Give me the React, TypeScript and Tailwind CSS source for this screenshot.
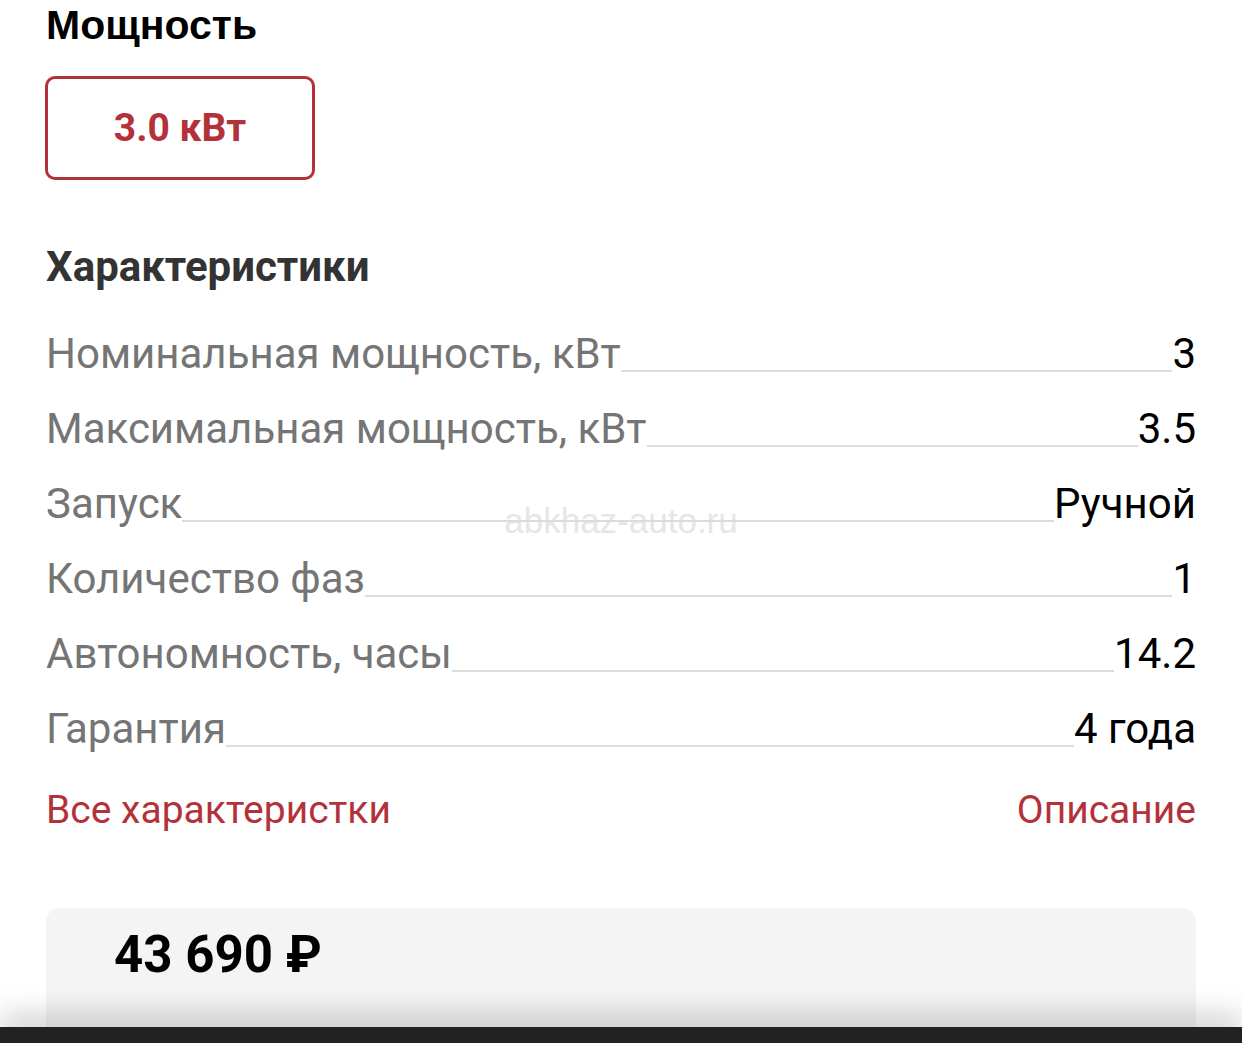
import React from 'react';

const specs = [
  { label: 'Номинальная мощность, кВт', value: '3' },
  { label: 'Максимальная мощность, кВт', value: '3.5' },
  { label: 'Запуск', value: 'Ручной' },
  { label: 'Количество фаз', value: '1' },
  { label: 'Автономность, часы', value: '14.2' },
  { label: 'Гарантия', value: '4 года' },
];

export default function App() {
  return (
    <div className="relative h-[1043px] bg-white px-[46px] font-['Roboto',sans-serif] overflow-hidden">
      {/* watermark */}
      <div className="pointer-events-none absolute left-1/2 top-[503px] -translate-x-1/2 text-[35px] leading-none text-[#e6e6e6] font-['Liberation_Sans',Arial,sans-serif]">
        abkhaz-auto.ru
      </div>

      {/* Power */}
      <h2 className="pt-[5px] text-[41px] leading-none font-bold text-black font-['Liberation_Sans',Arial,sans-serif]">
        Мощность
      </h2>
      <div className="mt-[30px] ml-[-1px] flex h-[104px] w-[270px] items-center justify-center rounded-[10px] border-[3px] border-[#b3323a]">
        <span className="text-[39px] leading-none font-bold text-[#b3323a]">3.0 кВт</span>
      </div>

      {/* Specs */}
      <h3 className="mt-[66px] text-[42px] leading-none font-bold text-[#333]">Характеристики</h3>
      <div className="relative z-[1] mt-[16px]">
        {specs.map((s) => (
          <div key={s.label} className="flex h-[75px] items-end">
            <span className="text-[42px] leading-[50px] text-[#757575] whitespace-nowrap">{s.label}</span>
            <div className="mb-[7px] flex-1 border-b-2 border-[#dcdcdc]" />
            <span className="text-[42px] leading-[50px] text-black whitespace-nowrap">{s.value}</span>
          </div>
        ))}
      </div>

      <div className="mt-[31px] flex items-center justify-between text-[39px] leading-[50px] text-[#b3323a]">
        <span>Все характеристки</span>
        <span>Описание</span>
      </div>

      {/* Price */}
      <div className="mt-[73px] h-[135px] rounded-t-[14px] bg-[#f4f4f4] px-[68px] pt-[21px]">
        <div className="text-[51px] leading-none font-bold text-black">43 690 ₽</div>
      </div>

      {/* bottom bar */}
      <div className="fixed bottom-0 left-0 right-0 h-[16px] bg-[#222] shadow-[0_-8px_30px_rgba(0,0,0,0.3)]" />
    </div>
  );
}
